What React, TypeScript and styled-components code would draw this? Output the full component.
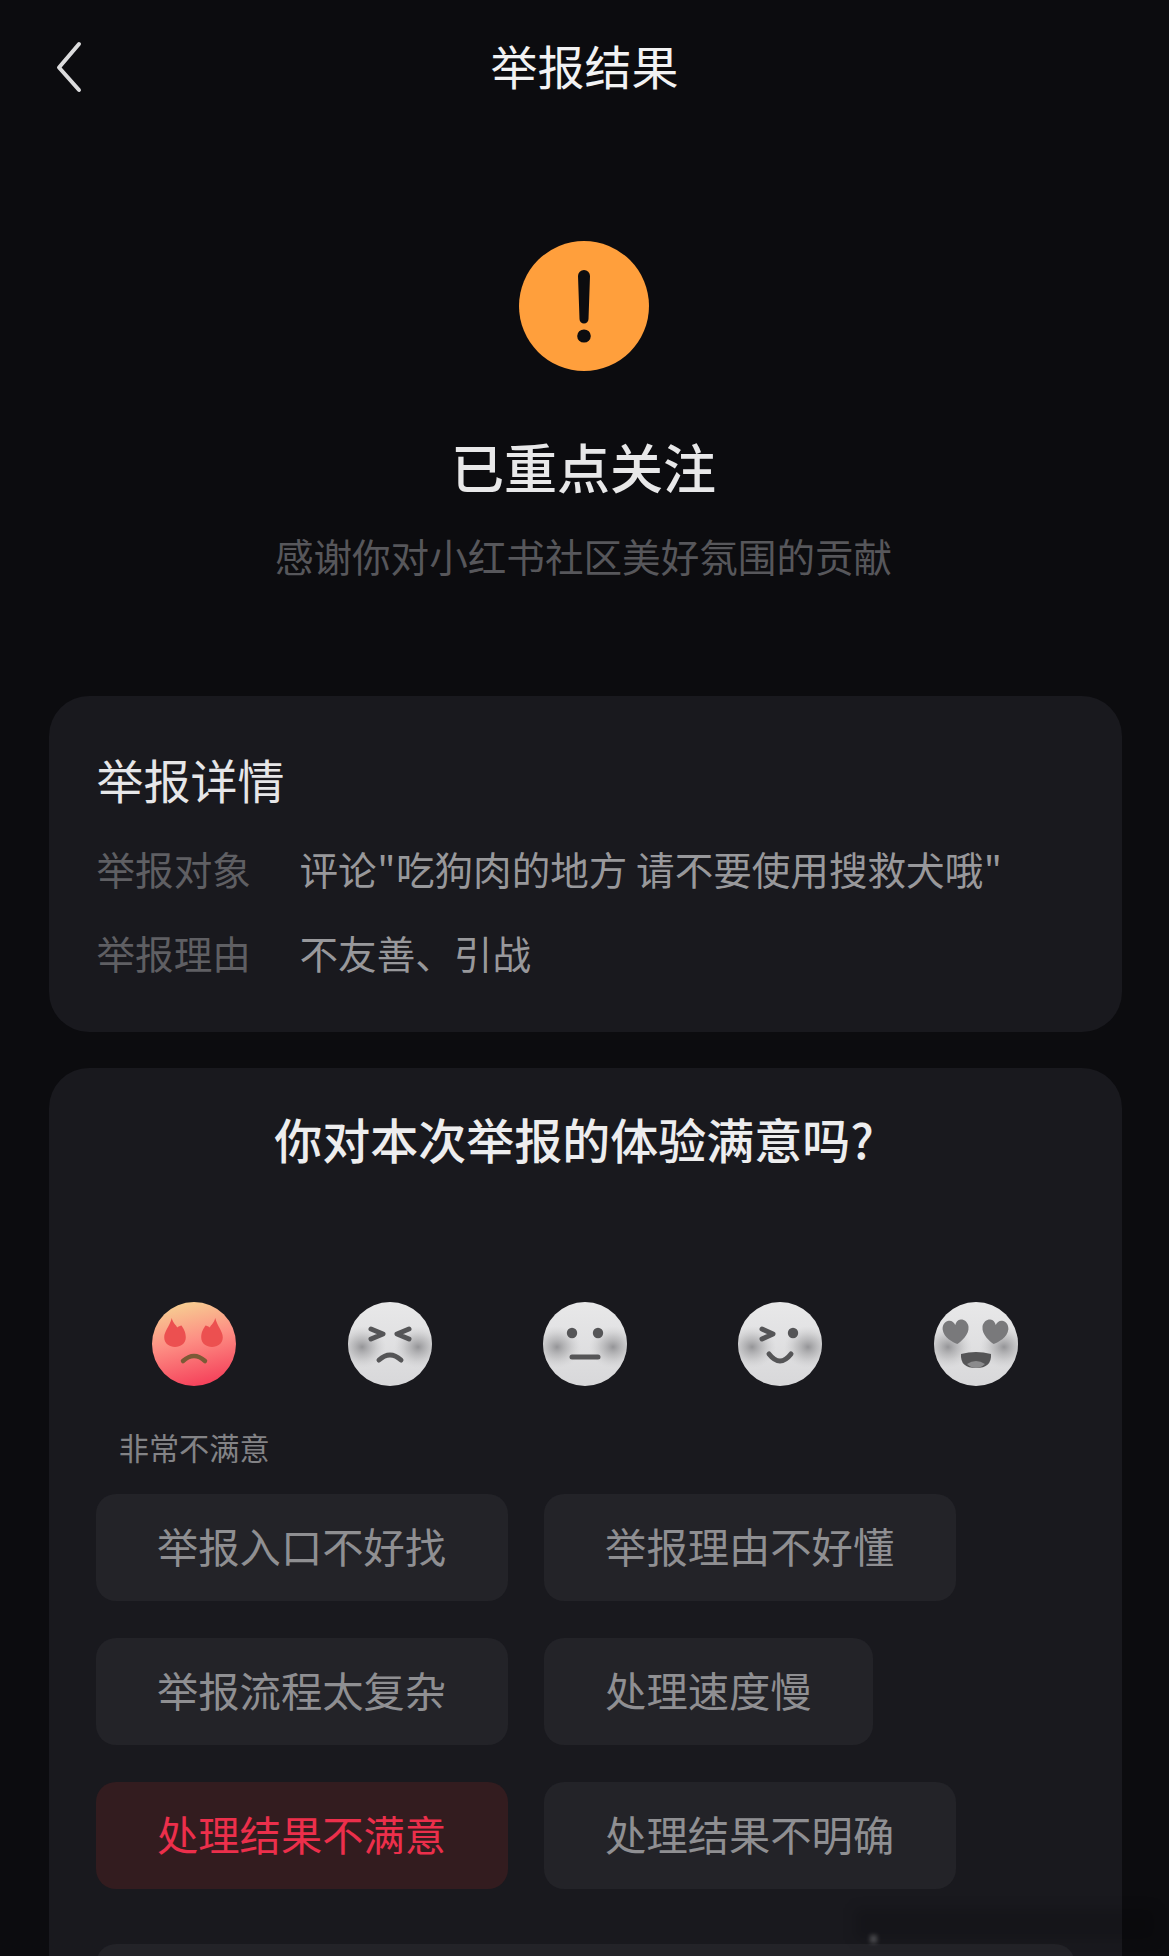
import React from "react";
import styled, { createGlobalStyle } from "styled-components";

const GlobalStyle = createGlobalStyle`
  html, body {
    margin: 0;
    padding: 0;
    background: #0c0c0f;
  }
  * {
    box-sizing: border-box;
  }
`;

const Page = styled.div`
  position: relative;
  width: 1169px;
  height: 1956px;
  overflow: hidden;
  background: #0c0c0f;
  font-family: "Noto Sans CJK SC", "Noto Sans", sans-serif;
  font-weight: 400;
`;

const Header = styled.header`
  display: grid;
  grid-template-columns: 1fr auto 1fr;
  align-items: center;
  height: 134px;
  padding-left: 55px;
`;

const BackIcon = styled.svg`
  width: 28px;
  height: 52px;
  display: block;
`;

const HeaderTitle = styled.h1`
  margin: 0 55px 5px 0;
  font-size: 47px;
  line-height: 60px;
  font-weight: 400;
  color: #f2f2f3;
`;

const Result = styled.section`
  display: flex;
  flex-direction: column;
  align-items: center;
  padding: 107px 2px 0 0;
  height: 562px;
`;

const AlertIcon = styled.svg`
  width: 130px;
  height: 130px;
  display: block;
`;

const ResultTitle = styled.h2`
  margin: 58px 0 0;
  font-size: 53px;
  line-height: 74px;
  font-weight: 500;
  color: #e8e8e9;
`;

const ResultNote = styled.p`
  margin: 27px 0 0;
  font-size: 38.6px;
  line-height: 50px;
  font-weight: 400;
  color: #57575b;
`;

const Card = styled.section`
  margin: 0 47.5px 36px 48.5px;
  padding: 0 48px;
  background: #19191e;
  border-radius: 40px;
`;

const DetailCard = styled(Card)`
  height: 336px;
  padding-top: 48.5px;
`;

const DetailTitle = styled.h3`
  margin: 0 0 30px;
  font-size: 47px;
  line-height: 68px;
  font-weight: 400;
  color: #e6e6e8;
`;

const DetailRow = styled.div`
  display: grid;
  grid-template-columns: 203px 1fr;
  font-size: 38.6px;
  line-height: 50px;
  margin-bottom: 34px;
`;

const DetailLabel = styled.span`
  color: #5f5f63;
`;

const DetailValue = styled.span`
  color: #98989b;
  white-space: nowrap;
`;

const Quote = styled.span`
  padding: 0 0.5px;
`;

const SurveyCard = styled(Card)`
  height: 1000px;
  padding-top: 36px;
`;

const SurveyTitle = styled.h3`
  margin: 0;
  padding-right: 22px;
  text-align: center;
  font-size: 48px;
  line-height: 68px;
  font-weight: 500;
  color: #ededee;
`;

const Faces = styled.div`
  display: grid;
  grid-template-columns: repeat(5, 1fr);
  margin-top: 130px;
`;

const FaceItem = styled.div`
  display: flex;
  flex-direction: column;
  align-items: center;
`;

const FaceIcon = styled.svg`
  width: 84px;
  height: 84px;
  display: block;
`;

const FaceLabel = styled.span`
  margin-top: 41px;
  font-size: 30.2px;
  line-height: 40px;
  color: #838386;
`;

const Chips = styled.div`
  display: flex;
  flex-wrap: wrap;
  gap: 37px 36px;
  margin: 27px 0 0 -1px;
`;

const Chip = styled.div<{ $selected?: boolean }>`
  height: 107px;
  padding: 0 61.5px 5px;
  display: flex;
  align-items: center;
  border-radius: 20px;
  font-size: 41.3px;
  white-space: nowrap;
  background: ${(p) => (p.$selected ? "#331c1f" : "#232328")};
  color: ${(p) => (p.$selected ? "#ec2f4b" : "#8f8f92")};
`;

const OtherInput = styled.div`
  margin: 55px 0 0 -1px;
  width: 979px;
  height: 160px;
  background: #232328;
  border-radius: 20px;
`;

const WatermarkSmudge = styled.div`
  position: absolute;
  left: 855px;
  top: 1908px;
  width: 300px;
  height: 32px;
  background: rgba(0, 0, 0, 0.14);
  filter: blur(6px);
`;

const WatermarkSpot = styled.div`
  position: absolute;
  left: 870px;
  top: 1935px;
  width: 7px;
  height: 8px;
  background: rgba(255, 255, 255, 0.22);
  filter: blur(2px);
`;

const faceInk = "#555557";

const GrayBase = ({ id }: { id: string }) => (
  <>
    <defs>
      <linearGradient id={`${id}-b`} x1="0" y1="0" x2="0" y2="1">
        <stop offset="0" stopColor="#e8e8e9" />
        <stop offset="1" stopColor="#d8d8da" />
      </linearGradient>
      <radialGradient id={`${id}-c`}>
        <stop offset="0" stopColor="#8c8c8f" stopOpacity="0.9" />
        <stop offset="0.5" stopColor="#a8a8aa" stopOpacity="0.5" />
        <stop offset="1" stopColor="#c8c8ca" stopOpacity="0" />
      </radialGradient>
      <clipPath id={`${id}-clip`}>
        <circle cx="42" cy="42" r="42" />
      </clipPath>
    </defs>
    <circle cx="42" cy="42" r="42" fill={`url(#${id}-b)`} />
    <g clipPath={`url(#${id}-clip)`}>
      <ellipse cx="14" cy="45" rx="24" ry="21" fill={`url(#${id}-c)`} />
      <ellipse cx="70" cy="45" rx="24" ry="21" fill={`url(#${id}-c)`} />
    </g>
  </>
);

const flame =
  "M-3-14C-2-9 1-8 2-5 3-6 5-7 6-7 8-4 10-1 10 4 10 10 5 13 0 13-5 13-10 10-10 4-10-2-5-6-3-14Z";

const FuriousFace = () => (
  <FaceIcon viewBox="0 0 84 84">
    <defs>
      <linearGradient id="furious" x1="0.35" y1="0" x2="0.6" y2="1">
        <stop offset="0" stopColor="#f6cf92" />
        <stop offset="0.45" stopColor="#fd8f84" />
        <stop offset="1" stopColor="#f5405a" />
      </linearGradient>
    </defs>
    <circle cx="42" cy="42" r="42" fill="url(#furious)" />
    <path transform="translate(23 31) scale(1.08)" fill="#ec5050" d={flame} />
    <path transform="translate(60 31) scale(-1.08 1.08)" fill="#ec5050" d={flame} />
    <path d="M31 59Q42 49 53 59" fill="none" stroke="#7c5a36" strokeWidth="4.5" strokeLinecap="round" />
  </FaceIcon>
);

const SquintFace = () => (
  <FaceIcon viewBox="0 0 84 84">
    <GrayBase id="squint" />
    <g fill="none" stroke={faceInk} strokeWidth="5" strokeLinecap="round" strokeLinejoin="round">
      <path d="M23 27L35 32 23 37" />
      <path d="M61 27L49 32 61 37" />
      <path d="M31 58Q42 48 53 58" />
    </g>
  </FaceIcon>
);

const NeutralFace = () => (
  <FaceIcon viewBox="0 0 84 84">
    <GrayBase id="neutral" />
    <circle cx="29" cy="31" r="5.2" fill={faceInk} />
    <circle cx="55" cy="31" r="5.2" fill={faceInk} />
    <path d="M29 55H55" stroke={faceInk} strokeWidth="5" strokeLinecap="round" />
  </FaceIcon>
);

const WinkFace = () => (
  <FaceIcon viewBox="0 0 84 84">
    <GrayBase id="wink" />
    <path
      d="M24 27L35 32 24 37"
      fill="none"
      stroke={faceInk}
      strokeWidth="5"
      strokeLinecap="round"
      strokeLinejoin="round"
    />
    <circle cx="55" cy="31" r="5.2" fill={faceInk} />
    <path d="M31 52Q42 66 53 52" fill="none" stroke={faceInk} strokeWidth="5" strokeLinecap="round" />
  </FaceIcon>
);

const heart =
  "M0 12C-4 10-13 4-13-4-13-9-9-12-6-12-3-12-1-10 0-7 1-10 3-12 6-12 9-12 13-9 13-4 13 4 4 10 0 12Z";

const LoveFace = () => (
  <FaceIcon viewBox="0 0 84 84">
    <GrayBase id="love" />
    <path transform="translate(22 30) rotate(-6)" fill="#79797b" d={heart} />
    <path transform="translate(61 30) rotate(6)" fill="#79797b" d={heart} />
    <path d="M27 52Q42 48 57 52 58 66 42 66 26 66 27 52Z" fill={faceInk} />
    <path d="M33 62Q42 56 51 62 47 66 42 66 37 66 33 62Z" fill="#8b8b8d" />
  </FaceIcon>
);

const faces = [
  { key: "furious", icon: <FuriousFace />, label: "非常不满意" },
  { key: "squint", icon: <SquintFace /> },
  { key: "neutral", icon: <NeutralFace /> },
  { key: "wink", icon: <WinkFace /> },
  { key: "love", icon: <LoveFace /> },
];

const reasons = [
  { text: "举报入口不好找" },
  { text: "举报理由不好懂" },
  { text: "举报流程太复杂" },
  { text: "处理速度慢" },
  { text: "处理结果不满意", selected: true },
  { text: "处理结果不明确" },
];

const App = () => (
  <Page>
    <GlobalStyle />
    <Header>
      <BackIcon viewBox="0 0 28 52" fill="none">
        <path d="M24 3L4 26.5 24 49" stroke="#dcdcdd" strokeWidth="4" strokeLinecap="round" strokeLinejoin="round" />
      </BackIcon>
      <HeaderTitle>举报结果</HeaderTitle>
    </Header>

    <Result>
      <AlertIcon viewBox="0 0 130 130">
        <circle cx="65" cy="65" r="65" fill="#ff9f3c" />
        <path d="M59 35a6 6 0 0 1 12 0L69.5 78a4.5 4.5 0 0 1-9 0Z" fill="#0c0c0f" />
        <ellipse cx="65" cy="95" rx="6.8" ry="6.6" fill="#0c0c0f" />
      </AlertIcon>
      <ResultTitle>已重点关注</ResultTitle>
      <ResultNote>感谢你对小红书社区美好氛围的贡献</ResultNote>
    </Result>

    <DetailCard>
      <DetailTitle>举报详情</DetailTitle>
      <DetailRow>
        <DetailLabel>举报对象</DetailLabel>
        <DetailValue>
          评论<Quote>"</Quote>吃狗肉的地方 请不要使用搜救犬哦<Quote>"</Quote>
        </DetailValue>
      </DetailRow>
      <DetailRow>
        <DetailLabel>举报理由</DetailLabel>
        <DetailValue>不友善、引战</DetailValue>
      </DetailRow>
    </DetailCard>

    <SurveyCard>
      <SurveyTitle>你对本次举报的体验满意吗?</SurveyTitle>
      <Faces>
        {faces.map((face) => (
          <FaceItem key={face.key}>
            {face.icon}
            {face.label && <FaceLabel>{face.label}</FaceLabel>}
          </FaceItem>
        ))}
      </Faces>
      <Chips>
        {reasons.map((reason) => (
          <Chip key={reason.text} $selected={reason.selected}>
            {reason.text}
          </Chip>
        ))}
      </Chips>
      <OtherInput />
    </SurveyCard>

    <WatermarkSmudge />
    <WatermarkSpot />
  </Page>
);

export default App;
